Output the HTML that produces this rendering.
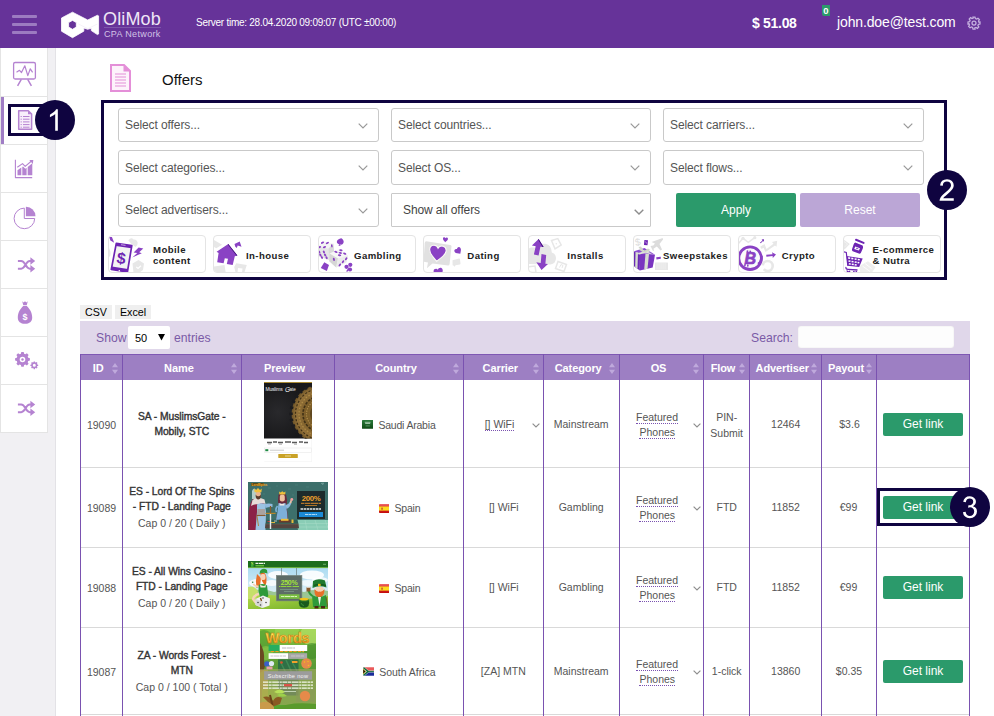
<!DOCTYPE html>
<html>
<head>
<meta charset="utf-8">
<title>Offers</title>
<style>
*{box-sizing:border-box;margin:0;padding:0}
html,body{width:994px;height:716px;overflow:hidden;background:#fff}
body{font-family:"Liberation Sans",sans-serif;color:#555;position:relative}
.abs{position:absolute}
/* header */
#hdr{position:absolute;left:0;top:0;width:994px;height:48px;background:#663399}
#hdr .bar{position:absolute;left:12px;width:25px;height:3px;background:#9c7bc1;border-radius:1px}
#hdr .t{position:absolute;color:#fff;white-space:nowrap;line-height:1}
/* sidebar */
#sideBg{position:absolute;left:0;top:48px;width:56px;height:668px;background:#f1f0f3;border-right:1px solid #e3e2e6}
#side{position:absolute;left:0;top:48px;width:48px;height:385px;background:#fff;border-left:1px solid #e4e4e4;border-right:1px solid #e4e4e4;border-bottom:1px solid #e4e4e4}
#side .it{position:absolute;left:0;width:46px;height:49px;border-bottom:1px solid #e4e4e4}
#side svg{position:absolute;overflow:visible}
.navy{background:#0f0440}
.circ{position:absolute;width:40px;height:40px;border-radius:50%;background:#0f0440;color:#fff;font-size:30px;line-height:40px;text-align:center}
/* filter */
.sel{position:absolute;height:34px;border:1px solid #c9c9c9;border-radius:3px;background:#fff;font-size:12px;letter-spacing:-.1px;color:#555;line-height:32px;padding-left:6px;white-space:nowrap}
.sel svg{position:absolute;right:10px;top:14px}
.btn{position:absolute;color:#fff;font-size:12px;text-align:center;border-radius:2px}
.card{position:absolute;top:235px;width:98px;height:38px;border:1px solid #e4e4e4;border-radius:4px;background:#fff;overflow:hidden}
.card .lb{position:absolute;font-weight:bold;font-size:9.600px;line-height:11px;letter-spacing:.42px;color:#222;white-space:nowrap}
.card svg{position:absolute;left:0;top:0}
/* table */
#tbl{position:absolute;left:80px;top:354px;width:890px}
.th{position:absolute;top:354px;height:26px;background:#9d7fc3;color:#fff;font-weight:bold;font-size:11px;line-height:28px;letter-spacing:-.1px;white-space:nowrap}
.vl{position:absolute;width:1px;background:#7a52b0;top:354px;height:362px}
.hl{position:absolute;left:81px;width:889px;height:1px;background:#d9d9d9}
.td{position:absolute;font-size:10.5px;color:#555;white-space:nowrap;line-height:16px;text-align:center}
.nm{color:#333;font-weight:normal;font-size:10.300px;letter-spacing:-.05px;-webkit-text-stroke:.38px #333}
.ct{letter-spacing:-.2px}
.dot{border-bottom:1px dotted #7a52b0}
.gl{position:absolute;left:883px;width:80px;height:22.700px;background:#2b9a6b;color:#fff;font-size:12px;line-height:23px;text-align:center;border-radius:2px}
.srt{position:absolute;top:362.700px;width:6px;height:11px}
</style>
</head>
<body>

<!-- ================= HEADER ================= -->
<div id="hdr">
  <div class="bar" style="top:15px"></div>
  <div class="bar" style="top:23px"></div>
  <div class="bar" style="top:31px"></div>
  <svg class="abs" style="left:60px;top:10px" width="42" height="30" viewBox="60 10 42 30">
    <path fill="#fff" stroke="#fff" stroke-width=".8" stroke-linejoin="round" fill-rule="evenodd" d="M72.500 12.200L87.700 20L97.400 15.300L98.600 15.900L98.600 34L97.400 34.600L91.300 30.600L91.300 28.200L87.700 29.300L83.800 28L83.800 31.200L72.500 37.700L61.500 31.200L61.500 18Z M72.500 20.400L76.300 22.600L76.300 27.100L72.500 29.300L68.600 27.100L68.600 22.600Z"/>
    <path d="M78.400 23.900L87.700 28.700L97.400 24" fill="none" stroke="#ece4f3" stroke-width=".5"/>
  </svg>
  <div class="t" style="left:103px;top:10px;font-size:18px;letter-spacing:.15px;color:#eee6f6">OliMob</div>
  <div class="abs" style="left:104px;top:27px;width:57px;height:1px;background:#7d55aa"></div>
  <div class="t" style="left:104px;top:29.500px;font-size:9px;letter-spacing:.35px;color:#d2c2e6">CPA Network</div>
  <div class="t" id="stime" style="left:196px;top:18px;font-size:10px;letter-spacing:-.26px">Server time: 28.04.2020 09:09:07 (UTC ±00:00)</div>
  <div class="t" id="bal" style="left:752px;top:16px;font-size:14px;font-weight:bold;letter-spacing:-.3px">$ 51.08</div>
  <div class="abs" style="left:822px;top:5px;width:8px;height:11px;background:#2b9a6b;color:#fff;font-size:9.500px;font-weight:bold;line-height:11px;text-align:center;border-radius:0 0 0 2px">0</div>
  <div class="t" id="mail" style="left:837px;top:15px;font-size:14px;letter-spacing:-.13px">john.doe@test.com</div>
  <svg class="abs" style="left:967px;top:16px" width="14" height="14" viewBox="0 0 14 14" fill="none" stroke="#c6b2e0" stroke-width="1.250">
    <circle cx="7" cy="7" r="2"/>
    <path d="M6 1h2l.4 1.6 1.2.5 1.4-.9 1.4 1.4-.9 1.4.5 1.2L13 6v2l-1.600.4-.5 1.200.900 1.400-1.400 1.400-1.400-.900-1.200.500L8 13H6l-.4-1.600-1.200-.500-1.400.900-1.400-1.400.900-1.400-.500-1.200L1 8V6l1.600-.4.500-1.200-.900-1.400 1.400-1.400 1.400.900 1.200-.500z"/>
  </svg>
</div>

<!-- ================= SIDEBAR ================= -->
<div id="sideBg"></div>
<div id="side">
  <div class="it" style="top:0"></div>
  <div class="it" style="top:48px"></div>
  <div class="it" style="top:96px"></div>
  <div class="it" style="top:144px"></div>
  <div class="it" style="top:192px"></div>
  <div class="it" style="top:240px"></div>
  <div class="it" style="top:288px"></div>
  <div class="it" style="top:336px;border-bottom:0"></div>
  <div class="abs" style="left:0;top:49px;width:3px;height:47px;background:#a07dc5"></div>
</div>
<!-- sidebar icons -->
<svg class="abs" style="left:0;top:48px" width="60" height="390" viewBox="0 48 60 390" fill="none" stroke="#b583d1" stroke-width="1.300" stroke-linejoin="round">
  <!-- 1 presentation -->
  <rect x="13.600" y="62.500" width="21.800" height="16.500" rx="1.500"/>
  <path d="M21.300 79.300L17.600 85.800M27.700 79.300L31.400 85.800" stroke-width="1.500"/>
  <path d="M16.500 72.200L19.500 70.300L21.500 72.500L24.800 65.800L27.800 75.600L30.300 68.800L32.600 72.300" stroke-width="1.200"/>
  <!-- 2 document -->
  <path d="M18.700 110.700H28.300L31.600 114V129.300H18.700Z" stroke-width="1.500" fill="#f8effb"/>
  <path d="M28 110.500V114.300H31.800Z" fill="#b583d1" stroke="none"/>
  <path d="M23 116.500H29.500M23 119.200H29.500M23 121.900H29.500M23 124.600H29.500M23 127.200H29.500" stroke-width="1"/>
  <path d="M20.600 116.500H21.800M20.600 119.200H21.800M20.600 121.900H21.800M20.600 124.600H21.800M20.600 127.200H21.800" stroke-width="1"/>
  <!-- 3 chart -->
  <path d="M15.400 159.800V177.600H32.200" stroke-width="1.100"/>
  <path d="M17.500 170.200L21.300 167.500V175.300H17.500ZM22.300 167L23 166.500L25.300 168.800L26.600 167.800V175.300H22.300ZM27.700 167L32.300 163.200V175.300H27.700Z" fill="#b583d1" stroke="none"/>
  <path d="M17.300 167.300L22.500 163.600L25.200 166.300L31.500 161" stroke-width="1.100"/>
  <path d="M29.300 160.100L33.300 159.900L32.800 164Z" fill="#b583d1" stroke="none"/>
  <!-- 4 pie -->
  <path d="M24.300 208.100A10.300 10.300 0 1 0 34.700 218.500H24.300Z" stroke-width="1"/>
  <path d="M25.900 206.800A9.400 9.400 0 0 1 35.500 216.200H25.900Z" fill="#b583d1" stroke="none"/>
  <!-- 5 shuffle -->
  <g stroke-width="2">
    <path d="M17.900 261H21.200C25.500 261 25.500 268.700 29.800 268.700H31.500M17.900 268.700H21.200C25.500 268.700 25.500 261 29.800 261H31.500"/>
    <path d="M30.400 257.200L35.200 261L30.400 264.800ZM30.400 264.900L35.200 268.700L30.400 272.500Z" fill="#b583d1" stroke="none"/>
  </g>
  <!-- 6 money bag -->
  <path d="M22.200 301.200L23.600 302.400L25 301.200L26.400 302.400L27.800 301.200L26.700 305.200H23.300ZM23.200 306H26.800C29.500 308.500 32.200 312.500 32.200 317.500C32.200 321.500 29.500 323.800 25 323.800C20.500 323.800 17.800 321.500 17.800 317.500C17.800 312.500 20.500 308.500 23.200 306Z" fill="#b583d1" stroke="none"/>
  <text x="25" y="320.200" font-family="Liberation Sans, sans-serif" font-weight="bold" font-size="9" text-anchor="middle" fill="#fff" stroke="none">$</text>
  <!-- 7 gears -->
  <g stroke="none" fill="#b583d1">
    <path fill-rule="evenodd" d="M21.300 352h2.400l.4 1.700 1.300.500 1.500-.900 1.700 1.700-.900 1.500.5 1.300 1.700.4v2.400l-1.700.4-.5 1.300.9 1.500-1.700 1.700-1.500-.900-1.300.500-.4 1.700h-2.400l-.4-1.700-1.300-.500-1.500.900-1.700-1.700.900-1.500-.500-1.300-1.700-.400v-2.400l1.700-.4.500-1.300-.900-1.500 1.700-1.700 1.500.900 1.300-.500zM22.500 356.700a2.800 2.800 0 1 0 0 5.600a2.800 2.800 0 1 0 0-5.600z"/>
    <circle cx="22.500" cy="359.500" r="1.200"/>
    <path fill-rule="evenodd" d="M33.700 361.400h1.200l.2.900.7.300.8-.5.900.9-.5.800.3.700.9.200v1.200l-.9.200-.3.700.5.800-.9.900-.8-.5-.7.300-.2.900h-1.200l-.2-.9-.7-.3-.8.500-.9-.9.500-.8-.3-.7-.9-.2v-1.200l.9-.2.300-.7-.5-.8.900-.9.800.5.700-.3zM34.300 363.800a1.500 1.500 0 1 0 0 3a1.500 1.500 0 1 0 0-3z"/>
  </g>
  <!-- 8 shuffle -->
  <g stroke-width="2" transform="translate(0 143.500)">
    <path d="M17.900 261H21.200C25.500 261 25.500 268.700 29.800 268.700H31.500M17.900 268.700H21.200C25.500 268.700 25.500 261 29.800 261H31.500"/>
    <path d="M30.400 257.200L35.200 261L30.400 264.800ZM30.400 264.900L35.200 268.700L30.400 272.500Z" fill="#b583d1" stroke="none"/>
  </g>
</svg>
<!-- annotation 1 -->
<div class="abs" style="left:8px;top:104px;width:40px;height:32px;border:3px solid #0f0440"></div>
<svg class="abs" style="left:35px;top:100px" width="40" height="40" viewBox="0 0 40 40"><circle cx="20" cy="20" r="20" fill="#0f0440"/><path transform="translate(11.66 30.80) scale(0.014648 -0.014648)" d="M763 0H583V1147Q518 1085 412.500 1023Q307 961 223 930V1104Q374 1175 487 1276Q600 1377 647 1472H763Z" fill="#fff"/></svg>


<!-- ================= TITLE ================= -->
<svg class="abs" style="left:110px;top:64px" width="21" height="28" viewBox="0 0 21 28">
  <path d="M1 1H14L20 7V27H1Z" fill="#fdf3fb" stroke="#e48fd8" stroke-width="2"/>
  <path d="M13.500 .5V7.500H20.500Z" fill="#e48fd8"/>
  <path d="M5 10H16M5 13H16M5 16H16M5 19H16M5 22H16" stroke="#e48fd8" stroke-width="1.200"/>
</svg>
<div class="abs" id="ttl" style="left:162px;top:71px;font-size:15px;line-height:17px;color:#111">Offers</div>

<!-- ================= FILTER ================= -->
<div class="abs" style="left:101px;top:100px;width:846px;height:180px;border:3px solid #0f0440"></div>
<div class="sel" style="left:118px;top:108px;width:261px">Select offers...<svg width="10" height="6" viewBox="0 0 10 6"><path d="M.7.700L5 5L9.300.7" fill="none" stroke="#999" stroke-width="1.200"/></svg></div>
<div class="sel" style="left:391px;top:108px;width:260px">Select countries...<svg width="10" height="6" viewBox="0 0 10 6"><path d="M.7.700L5 5L9.300.7" fill="none" stroke="#999" stroke-width="1.200"/></svg></div>
<div class="sel" style="left:663px;top:108px;width:261px">Select carriers...<svg width="10" height="6" viewBox="0 0 10 6"><path d="M.7.700L5 5L9.300.7" fill="none" stroke="#999" stroke-width="1.200"/></svg></div>
<div class="sel" style="left:118px;top:150px;width:261px;height:35px;line-height:34.500px">Select categories...<svg width="10" height="6" viewBox="0 0 10 6"><path d="M.7.700L5 5L9.300.7" fill="none" stroke="#999" stroke-width="1.200"/></svg></div>
<div class="sel" style="left:391px;top:150px;width:260px;height:35px;line-height:34.500px">Select OS...<svg width="10" height="6" viewBox="0 0 10 6"><path d="M.7.700L5 5L9.300.7" fill="none" stroke="#999" stroke-width="1.200"/></svg></div>
<div class="sel" style="left:663px;top:150px;width:261px;height:35px;line-height:34.500px">Select flows...<svg width="10" height="6" viewBox="0 0 10 6"><path d="M.7.700L5 5L9.300.7" fill="none" stroke="#999" stroke-width="1.200"/></svg></div>
<div class="sel" style="left:118px;top:193px;width:261px">Select advertisers...<svg width="10" height="6" viewBox="0 0 10 6"><path d="M.7.700L5 5L9.300.7" fill="none" stroke="#999" stroke-width="1.200"/></svg></div>
<div class="sel" style="left:391px;top:193px;width:260px;padding-left:11px;color:#444;border-radius:1px;line-height:33.500px">Show all offers<svg style="right:6.500px;top:14.500px" width="10" height="6" viewBox="0 0 10 6"><path d="M.7.700L5 5L9.300.7" fill="none" stroke="#8c8c8c" stroke-width="1.400"/></svg></div>
<div class="btn" style="left:676px;top:193px;width:120px;height:34px;line-height:34px;background:#2b9a6b">Apply</div>
<div class="btn" style="left:800px;top:193px;width:120px;height:34px;line-height:34px;background:#bba6d6">Reset</div>
<svg class="abs" style="left:927px;top:170px" width="40" height="40" viewBox="0 0 40 40"><circle cx="20" cy="20" r="20" fill="#0f0440"/><path transform="translate(11.66 30.80) scale(0.014648 -0.014648)" d="M1031 173V0H62Q60 65 83 125Q120 224 201.500 320Q283 416 437 542Q676 738 760 852.500Q844 967 844 1069Q844 1176 767.500 1249.500Q691 1323 568 1323Q438 1323 360 1245Q282 1167 281 1029L96 1048Q115 1255 239 1363.500Q363 1472 572 1472Q783 1472 906 1355Q1029 1238 1029 1065Q1029 977 993 892Q957 807 873.500 713Q790 619 596 455Q434 319 388 270.500Q342 222 312 173Z" fill="#fff"/></svg>
<!--CARDS_BEGIN--><!-- category cards -->
<div class="card" style="left:108px"><svg width="98" height="38" viewBox="0 0 98 38" style="left:-1px;top:-1px"><path d="M0 11.500Q3.500 16 2 21.500L0 22Z" fill="#e7e7e7"/>
<path d="M20.300 5.500Q23 1.800 25.500 4.500Q28.500 4 29.700 7.500Q30 10.500 27.500 12.100Q24 10 20.300 5.500Z" fill="#e7e7e7"/>
<path d="M24.500 28.500L30.500 25L36 28.500L35 35L31.500 37.500H25.500Z" fill="#e7e7e7"/>
<path d="M28.300 31.800L30 33.500L33 30.700" fill="none" stroke="#fff" stroke-width="1.200"/>
<path d="M8.300 8.300L23.800 10.600L19.400 37L3.300 34.400Z" fill="#f3f3f3" stroke="#6d24b3" stroke-width="1.700" stroke-linejoin="round"/>
<path d="M8.300 8.300L23.800 10.600L23.300 13.200L7.800 10.900Z" fill="#6d24b3"/>
<path d="M3.900 31.400L20 34L19.400 37L3.300 34.400Z" fill="#6d24b3"/>
<circle cx="11.300" cy="35.700" r=".8" fill="#fff"/>
<path d="M13 9.700L17.500 10.400" stroke="#fff" stroke-width=".6"/>
<text x="13.300" y="28.800" font-family="Liberation Sans, sans-serif" font-weight="bold" font-size="16" text-anchor="middle" fill="#6d24b3" transform="rotate(9 13.300 23)">$</text>
<path d="M35.300 13.600L30.600 12.600L25.600 17.400L29.300 18.100L24.300 22.400L33.800 18.200L31.200 17.300Z" fill="#8a42c4"/>
<path d="M1.200 2.100L3.900 2.100L6.200 7.700L2.400 5.600Z" fill="#8a42c4"/></svg><div class="lb" style="left:44px;top:8.17px">Mobile<br>content</div></div>
<div class="card" style="left:213px"><svg width="98" height="38" viewBox="0 0 98 38" style="left:-1px;top:-1px"><path d="M.9 5L9.100 9.700L3.300 13.200L.9 12Z" fill="#e7e7e7"/>
<path d="M.9 31.400L11.500 30L12.700 37.500H.9Z" fill="#e7e7e7"/>
<path d="M23.200 28.200L33.800 30L31.400 37.500H29L29.500 33.500L25 33L24.500 37.500H22.600L21.200 32Z" fill="#e7e7e7"/>
<path d="M15.300 9.100L24.400 20.600L21.800 21.200L19.700 30L13.800 29.100L15 23.800L11.800 23.200L10.600 28.200L4.200 27.300L5.600 17.900L3.600 16.800Z" fill="#8a42c4"/>
<path d="M15.300 9.100L24.400 20.600L23.600 20.800L14.800 9.500Z" fill="#3d0f78"/>
<path d="M21.500 9.100L26.700 6.500L28.500 11.800L24.700 10.600L23.800 13L22.300 11.800Z" fill="#8a42c4"/></svg><div class="lb" style="left:32px;top:14.17px">In-house</div></div>
<div class="card" style="left:318px"><svg width="98" height="38" viewBox="0 0 98 38" style="left:-1px;top:-1px"><path d="M.3 10.800L5.500 6.300L15.300 8.400L16.500 19.500L11 25L.8 21.500Z" fill="#f4f4f4"/>
<path d="M.3 10.800L10.300 13.800L11 25L.8 21.500Z" fill="#e6e6e6"/>
<path d="M10.300 13.800L15.300 8.400L16.500 19.500L11 25Z" fill="#d9d9d9"/>
<ellipse cx="4.5" cy="7.7" rx="1.7" ry="0.95" transform="rotate(-25 4.5 7.7)" fill="#8a42c4"/><ellipse cx="9.4" cy="8" rx="1.7" ry="0.95" transform="rotate(-25 9.4 8)" fill="#8a42c4"/><ellipse cx="1.5" cy="12.1" rx="1.7" ry="0.95" transform="rotate(-25 1.5 12.1)" fill="#8a42c4"/><ellipse cx="6.5" cy="12.1" rx="1.7" ry="0.95" transform="rotate(-25 6.5 12.1)" fill="#8a42c4"/>
<ellipse cx="13.8" cy="10.9" rx="0.8" ry="1.6" transform="rotate(-10 13.8 10.9)" fill="#8a42c4"/>
<ellipse cx="1.2" cy="17" rx="0.95" ry="1.5" transform="rotate(-30 1.2 17)" fill="#8a42c4"/><ellipse cx="5.9" cy="17" rx="0.95" ry="1.5" transform="rotate(-30 5.9 17)" fill="#8a42c4"/><ellipse cx="2.4" cy="20" rx="0.95" ry="1.5" transform="rotate(-30 2.4 20)" fill="#8a42c4"/><ellipse cx="7.1" cy="20" rx="0.95" ry="1.5" transform="rotate(-30 7.1 20)" fill="#8a42c4"/><ellipse cx="3.9" cy="22.5" rx="0.95" ry="1.5" transform="rotate(-30 3.9 22.5)" fill="#8a42c4"/><ellipse cx="8.6" cy="22.7" rx="0.95" ry="1.5" transform="rotate(-30 8.6 22.7)" fill="#8a42c4"/>
<path d="M11.500 18.500L21.500 14.100L30 20.600L28.500 27.300L18.200 32.600L11.200 26.200Z" fill="#f6f6f6"/>
<path d="M11.500 18.500L20 23.500L18.200 32.600L11.200 26.200Z" fill="#d6d6d6"/>
<path d="M20 23.500L30 20.600L28.500 27.300L18.200 32.600Z" fill="#ebebeb"/>
<ellipse cx="15.9" cy="24.4" rx="1" ry="1.6" transform="rotate(-15 15.9 24.4)" fill="#8a42c4"/>
<ellipse cx="17.9" cy="16.8" rx="1.7" ry="0.95" transform="rotate(20 17.9 16.8)" fill="#8a42c4"/><ellipse cx="22.9" cy="15.3" rx="1.7" ry="0.95" transform="rotate(10 22.9 15.3)" fill="#8a42c4"/><ellipse cx="22.3" cy="17.9" rx="1.7" ry="0.95" transform="rotate(10 22.3 17.9)" fill="#8a42c4"/><ellipse cx="21.5" cy="20.2" rx="1.7" ry="0.95" transform="rotate(10 21.5 20.2)" fill="#8a42c4"/><ellipse cx="26.7" cy="18.6" rx="1.7" ry="0.95" transform="rotate(20 26.7 18.6)" fill="#8a42c4"/>
<ellipse cx="28.2" cy="23.8" rx="0.95" ry="1.7" transform="rotate(35 28.2 23.8)" fill="#8a42c4"/><ellipse cx="25" cy="26.7" rx="0.95" ry="1.7" transform="rotate(35 25 26.7)" fill="#8a42c4"/><ellipse cx="21.8" cy="30" rx="0.95" ry="1.7" transform="rotate(35 21.8 30)" fill="#8a42c4"/>
<path d="M22.600 3.200C26 4.500 26.500 7.500 24.500 9.200C23.800 9.700 23 9.500 22.800 9.200L23.200 11H21.200L22 9.200C21.200 9.700 20.200 9.500 19.500 8.800C18 7 19.500 4.500 22.600 3.200Z" fill="#8a42c4" transform="rotate(12 22.600 7)"/>
<path d="M6.300 27.300L11 30L8.800 36L2.800 33Z" fill="#8a42c4"/>
<g fill="#8a42c4"><circle cx="32.300" cy="29.800" r="2.100"/><circle cx="28.500" cy="31.800" r="2.100"/><circle cx="32" cy="34.500" r="2.100"/><path d="M31 32L28 36.500L30 36.500Z"/></g></svg><div class="lb" style="left:35px;top:14.17px">Gambling</div></div>
<div class="card" style="left:423px"><svg width="98" height="38" viewBox="0 0 98 38" style="left:-1px;top:-1px"><path d="M3.200 6.300Q1.800 6.500 1.700 8L.6 26.700L5 27.600L3.900 33.200L9.500 28.500L25 30.500Q26.300 30.600 26.600 29L28.500 11.500Q28.600 10.200 27.200 10Z" fill="#e1e1e1"/>
<path d="M29.500 25.200L36 23.500Q36.800 23.300 37 24.200L37.500 28.500Q37.500 29.300 36.800 29.500L32.500 30.300L31.500 32L31 30.600L30.500 30.700Q29.700 30.800 29.600 30Z" fill="#e7e7e7"/>
<path d="M0 -3.200C-1.500 -6.500 -7 -6 -7 -1.500C-7 2.500 -2.500 5 0 8C2.500 5 7 2.500 7 -1.500C7 -6 1.500 -6.500 0 -3.200Z" transform="translate(14.700 17) rotate(6) scale(1.180)" fill="#8a42c4" stroke="#fbfbf6" stroke-width=".9"/>
<path d="M0 -3.200C-1.500 -6.500 -7 -6 -7 -1.500C-7 2.500 -2.500 5 0 8C2.500 5 7 2.500 7 -1.500C7 -6 1.500 -6.500 0 -3.200Z" transform="translate(22.400 4.300) rotate(5) scale(.36)" fill="#8a42c4"/>
<path d="M0 -3.200C-1.500 -6.500 -7 -6 -7 -1.500C-7 2.500 -2.500 5 0 8C2.500 5 7 2.500 7 -1.500C7 -6 1.500 -6.500 0 -3.200Z" transform="translate(35 15.500) rotate(-35) scale(.5)" fill="#8a42c4"/>
<path d="M0 -3.200C-1.500 -6.500 -7 -6 -7 -1.500C-7 2.500 -2.500 5 0 8C2.500 5 7 2.500 7 -1.500C7 -6 1.500 -6.500 0 -3.200Z" transform="translate(15.400 36.800) rotate(-14) scale(.66)" fill="#8a42c4"/></svg><div class="lb" style="left:43.3px;top:14.17px">Dating</div></div>
<div class="card" style="left:528px"><svg width="98" height="38" viewBox="0 0 98 38" style="left:-1px;top:-1px"><path d="M.3 15.500Q.5 12.500 4 12.500L10 12.800Q12 8 17.400 8.800Q23.500 10 23.800 17.500Q27.800 18.500 28 23Q28 28.500 22.500 29.500L.3 29Z" fill="#e7e7e7"/>
<path d="M23.500 5.500L29.800 3.600L33.200 10L27 13.800Z" fill="none" stroke="#e7e7e7" stroke-width="1.500"/><circle cx="28.300" cy="8.700" r=".8" fill="#e7e7e7"/>
<path d="M30 26.500L38.500 29.500L36 36.500L27.500 33.500Z" fill="none" stroke="#e7e7e7" stroke-width="1.500"/><path d="M31.500 32.500L33 29.500L35 30.500L34 33" fill="none" stroke="#e7e7e7" stroke-width="1"/>
<path d="M.3 31.800L7 31L8 37.500H.3Z" fill="none" stroke="#e7e7e7" stroke-width="1.500"/>
<path d="M10.600 3.900L15.600 12.100L12.400 11.800L10.600 20.600L5.900 19.400L7.700 11.200L3.900 10.600Z" fill="#8a42c4"/>
<path d="M10.600 3.900L15.600 12.100L14.500 12L10.100 4.500Z" fill="#3d0f78"/>
<path d="M13.500 35L8.300 27.300L12.700 27.900L13.500 19.100L18.200 20L17.400 28.800L20 29.100Z" fill="#8a42c4"/></svg><div class="lb" style="left:38.3px;top:14.17px">Installs</div></div>
<div class="card" style="left:633px"><svg width="98" height="38" viewBox="0 0 98 38" style="left:-1px;top:-1px"><text x="4.800" y="10.500" font-family="Liberation Sans, sans-serif" font-size="10" text-anchor="middle" fill="#dcdcdc" transform="rotate(-12 4.800 7)">$</text>
<path d="M18.500 7L29 3.200Q30.500 3 30 4.500L26.500 9L29 14.500L27.500 15.500L23.800 11.500L20.500 13.800L21 15.500L20 16L18.500 13L17.500 11L20.300 10.500L22 8.500Z" fill="#dcdcdc"/>
<path d="M22.500 27.500H34.500Q35 27.500 35 28V34.500Q35 35 34.500 35H22.500Q22 35 22 34.500V28Q22 27.500 22.500 27.500Z" fill="#e7e7e7"/>
<path d="M24 28V34.500M26 28V34.500M28 28V34.500M30 28V34.500M32 28V34.500" stroke="#f4f4f4" stroke-width=".6"/>
<path d="M11.400 5L15 5.300L14.500 10.300L11 10Z" fill="#6d24b3"/><path d="M12.600 6.500L13.600 8.500" stroke="#cdb3ea" stroke-width=".8"/>
<path d="M23.200 22.300L27.700 21.700L27.900 23.700L23.500 24.500Z" fill="#8a42c4"/>
<path d="M.3 16.500L7 18L6.800 35.500L.3 30.800Z" fill="#6a2ab5"/>
<path d="M7 18L22 19.700L19.700 32.600L6.800 35.500Z" fill="#7a35c0"/>
<path d="M.3 16.500L11.500 13L22 19.700L7 18Z" fill="#8d4fd0"/>
<path d="M2.500 17L5 17.600L4.500 33.800L2.200 32.200Z" fill="#d6dbcf"/>
<path d="M12.500 18.600L16 19L14.500 33.800L11.200 34.500Z" fill="#d6dbcf"/>
<path d="M5.500 14.800L8 14L19 18.500L16.500 19Z" fill="#dfe3d8"/><path d="M14.500 15L17 16.500L6.500 19.500L3.500 18.800Z" fill="#dfe3d8"/>
<path d="M5.500 12L8 11.500L11 16.500L9 17Z" fill="#d0d5c8"/><path d="M15 13.500L17.500 15L12 17.500L10.500 16.500Z" fill="#d0d5c8"/></svg><div class="lb" style="left:29px;top:14.17px">Sweepstakes</div></div>
<div class="card" style="left:738px"><svg width="98" height="38" viewBox="0 0 98 38" style="left:-1px;top:-1px"><path d="M.3 8.600L5 3.300L10.300 7.400L16.800 2.700" fill="none" stroke="#e7e7e7" stroke-width="1.500"/><circle cx="5" cy="3.300" r="1.600" fill="#e7e7e7"/><circle cx="16.800" cy="2.700" r="1.600" fill="#e7e7e7"/>
<path d="M22.200 11.800L26.500 9L28.500 14L35.500 8.800L34 7L39.200 5.800L38.500 11.800L37 10.500L27.500 17L25.500 12.800L23.500 14Z" fill="#e7e7e7"/>
<circle cx="29.700" cy="31" r="5" fill="none" stroke="#e7e7e7" stroke-width="2.600" stroke-dasharray="12 4 20"/>
<circle cx="12.100" cy="23.200" r="11.300" fill="#fbfbfb" stroke="#8a42c4" stroke-width="2.800"/>
<path d="M20 29Q24 27 23.500 21" fill="none" stroke="#8a42c4" stroke-width="2.400"/>
<text x="12.300" y="29.200" font-family="Liberation Sans, sans-serif" font-weight="bold" font-style="italic" font-size="16" text-anchor="middle" fill="#8a42c4" stroke="#8a42c4" stroke-width=".7">B</text>
<path d="M9.600 15.300L9.200 17.500M12.400 15.700L12 17.900M7.200 29L6.800 31.200M10 29.500L9.600 31.700" stroke="#8a42c4" stroke-width="1.500"/>
<path d="M22 7.700L24.500 5.400L23.600 4.600L26 4.300L25.800 6.800L25 6L22.700 8.300Z" fill="#6d24b3"/>
<path d="M28.200 19.800L34.500 19.200L34 17.200L38 19.600L34.800 23L34.600 21L28.400 21.800Z" fill="#8a42c4"/></svg><div class="lb" style="left:42.7px;top:14.17px">Crypto</div></div>
<div class="card" style="left:843px"><svg width="98" height="38" viewBox="0 0 98 38" style="left:-1px;top:-1px"><path d="M0 3.900L6.800 8.900L1.500 14.400L0 13Z" fill="#e7e7e7"/><path d="M1 6.500L4.500 9L1.800 11.800" fill="none" stroke="#f7f7f7" stroke-width=".7"/>
<path d="M17.400 30.500L25 26.200L32.600 32L29 37.500H17.400L16.500 34Z" fill="#eeeeee"/><path d="M22 28.500L28.500 33.500M19.500 31L27 36.500" stroke="#fff" stroke-width=".8"/>
<path d="M13 4.800L20.600 7.900" stroke="#6d24b3" stroke-width="2" stroke-linecap="round"/>
<path d="M12.200 7.600L19.600 10.600Q20.500 12 19.800 13.500L17.800 18Q17 19 15.800 18.600L9.700 16.200Q8.600 15.500 9 14.300L10.600 9.500Q11 8 12.200 7.600Z" fill="#6d24b3"/>
<path d="M12.300 11.500L17 13.200L15.800 15.600L11.200 14Z" fill="#fff"/><path d="M13 13.200L15.300 13.800" stroke="#6d24b3" stroke-width=".8"/>
<path d="M.3 16.800L3.300 17.400L4.800 30.800" fill="none" stroke="#6d24b3" stroke-width="1.200"/>
<path d="M3.600 20.900L19.700 23.500L16.200 32L4.500 30.800Z" fill="#6d24b3"/>
<g fill="#fff"><rect x="5.200" y="22.200" width="2" height="1.600" transform="rotate(9 6 23)"/><rect x="8.400" y="22.700" width="2" height="1.600" transform="rotate(9 9 23)"/><rect x="11.600" y="23.200" width="2" height="1.600" transform="rotate(9 12 24)"/><rect x="14.800" y="23.700" width="2" height="1.600" transform="rotate(9 15 24)"/>
<rect x="5.500" y="25.200" width="2" height="1.600" transform="rotate(9 6 26)"/><rect x="8.600" y="25.700" width="2" height="1.600" transform="rotate(9 9 26)"/><rect x="11.700" y="26.200" width="2" height="1.600" transform="rotate(9 12 27)"/><rect x="14.600" y="26.700" width="1.800" height="1.600" transform="rotate(9 15 27)"/>
<rect x="5.800" y="28.100" width="2" height="1.500" transform="rotate(9 6 29)"/><rect x="8.800" y="28.500" width="2" height="1.500" transform="rotate(9 9 29)"/><rect x="11.800" y="29" width="2" height="1.500" transform="rotate(9 12 29)"/></g>
<path d="M3 32Q2.500 34.300 5 34.300L14.500 35" fill="none" stroke="#6d24b3" stroke-width="1.300"/>
<path d="M3.800 35.500Q5.300 38 7 35.800M10.400 36Q12 38.500 13.800 36.200" fill="none" stroke="#6d24b3" stroke-width="1.300"/></svg><div class="lb" style="left:28.5px;top:8.17px">E-commerce<br>&amp; Nutra</div></div>
<!--CARDS_END-->

<!-- ================= TABLE ================= -->
<div class="abs" style="left:80px;top:305px;width:32px;height:14px;background:#efefef;color:#000;font-size:10.7px;line-height:14px;text-align:center">CSV</div>
<div class="abs" style="left:115px;top:305px;width:36px;height:14px;background:#efefef;color:#000;font-size:10.7px;line-height:14px;text-align:center">Excel</div>
<div class="abs" style="left:80px;top:321px;width:890px;height:33px;background:#e0d7ea"></div>
<div class="abs" id="show" style="left:96px;top:331px;font-size:12.200px;line-height:15px;color:#7a5aa6">Show</div>
<div class="abs" style="left:128px;top:326px;width:42px;height:23px;background:#fff;border-radius:2px"></div>
<div class="abs" style="left:135px;top:332px;font-size:11px;line-height:13px;color:#000">50</div>
<svg class="abs" style="left:158px;top:334px" width="7" height="7" viewBox="0 0 7 7"><path d="M0 0H7L3.500 6.500Z" fill="#000"/></svg>
<div class="abs" id="entries" style="left:174px;top:331px;font-size:12.200px;line-height:15px;color:#7a5aa6">entries</div>
<div class="abs" id="search" style="left:751px;top:331px;font-size:12.200px;line-height:15px;color:#7a5aa6">Search:</div>
<div class="abs" style="left:798px;top:326px;width:156px;height:22px;background:#fdfdfd;border-radius:3px;box-shadow:inset 0 0 1.500px #ddd"></div>
<div class="abs" style="left:80px;top:354px;width:890px;height:26px;background:#9d7fc3;border-top:1px solid #7f58b3"></div>
<div class="th" style="left:58.2px;width:80px;text-align:center;background:none">ID</div>
<svg class="srt" style="left:112.2px" viewBox="0 0 6 11"><path d="M3 0L6 4.300H0ZM3 11L6 6.700H0Z" fill="#bfa9dc"/></svg>
<div class="th" style="left:138.9px;width:80px;text-align:center;background:none">Name</div>
<svg class="srt" style="left:231.0px" viewBox="0 0 6 11"><path d="M3 0L6 4.300H0ZM3 11L6 6.700H0Z" fill="#bfa9dc"/></svg>
<div class="th" style="left:244.5px;width:80px;text-align:center;background:none">Preview</div>
<div class="th" style="left:356.0px;width:80px;text-align:center;background:none">Country</div>
<svg class="srt" style="left:453.4px" viewBox="0 0 6 11"><path d="M3 0L6 4.300H0ZM3 11L6 6.700H0Z" fill="#bfa9dc"/></svg>
<div class="th" style="left:460.3px;width:80px;text-align:center;background:none">Carrier</div>
<svg class="srt" style="left:533.3px" viewBox="0 0 6 11"><path d="M3 0L6 4.300H0ZM3 11L6 6.700H0Z" fill="#bfa9dc"/></svg>
<div class="th" style="left:538.2px;width:80px;text-align:center;background:none">Category</div>
<svg class="srt" style="left:609.4px" viewBox="0 0 6 11"><path d="M3 0L6 4.300H0ZM3 11L6 6.700H0Z" fill="#bfa9dc"/></svg>
<div class="th" style="left:618.5px;width:80px;text-align:center;background:none">OS</div>
<svg class="srt" style="left:693.0px" viewBox="0 0 6 11"><path d="M3 0L6 4.300H0ZM3 11L6 6.700H0Z" fill="#bfa9dc"/></svg>
<div class="th" style="left:683.0px;width:80px;text-align:center;background:none">Flow</div>
<svg class="srt" style="left:739.2px" viewBox="0 0 6 11"><path d="M3 0L6 4.300H0ZM3 11L6 6.700H0Z" fill="#bfa9dc"/></svg>
<div class="th" style="left:742.3px;width:80px;text-align:center;background:none">Advertiser</div>
<svg class="srt" style="left:811.2px" viewBox="0 0 6 11"><path d="M3 0L6 4.300H0ZM3 11L6 6.700H0Z" fill="#bfa9dc"/></svg>
<div class="th" style="left:806.0px;width:80px;text-align:center;background:none">Payout</div>
<svg class="srt" style="left:865.6px" viewBox="0 0 6 11"><path d="M3 0L6 4.300H0ZM3 11L6 6.700H0Z" fill="#bfa9dc"/></svg>
<div class="hl" style="top:467px"></div>
<div class="hl" style="top:547px"></div>
<div class="hl" style="top:627px"></div>
<div class="hl" style="top:714px"></div>
<div class="vl" style="left:80px"></div>
<div class="vl" style="left:122px"></div>
<div class="vl" style="left:241px"></div>
<div class="vl" style="left:334px"></div>
<div class="vl" style="left:463px"></div>
<div class="vl" style="left:543px"></div>
<div class="vl" style="left:619px"></div>
<div class="vl" style="left:703px"></div>
<div class="vl" style="left:749px"></div>
<div class="vl" style="left:821px"></div>
<div class="vl" style="left:876px"></div>
<div class="vl" style="left:969px"></div>
<!--ROWS_BEGIN--><div class="td" style="left:31.5px;top:416.6px;width:140px;">19090</div>
<div class="td nm" style="left:111.8px;top:408.6px;width:140px;">SA - MuslimsGate -</div>
<div class="td nm" style="left:111.8px;top:424.4px;width:140px;">Mobily, STC</div>
<svg class="abs" style="left:361.8px;top:420.1px" width="11.300" height="8.800" viewBox="0 0 11.300 8.800"><defs><linearGradient id="gsa" x1="0" y1="0" x2="0" y2="1"><stop offset="0" stop-color="#2a7a3a"/><stop offset="1" stop-color="#0e4a14"/></linearGradient></defs><rect width="11.300" height="8.800" rx=".6" fill="url(#gsa)"/><path d="M2.800 2.300H8.500M3.200 3.500H8.200" stroke="#a9cdb0" stroke-width=".9"/><path d="M3.600 5.900H7.800" stroke="#9cc4a3" stroke-width=".5"/></svg>
<div class="td ct" style="left:378.4px;top:416.6px;text-align:left;letter-spacing:-0.2px">Saudi Arabia</div>
<div class="td" style="left:429.5px;top:416.0px;width:140px;"><span class="dot">[] WiFi</span></div>
<svg class="abs" style="left:532px;top:422.6px" width="8" height="5" viewBox="0 0 8 5"><path d="M.6.600L4 4L7.400.6" fill="none" stroke="#8e8e8e" stroke-width="1.150"/></svg>
<div class="td" style="left:511.2px;top:416.4px;width:140px;">Mainstream</div>
<div class="td" style="left:587.0px;top:408.6px;width:140px;"><span class="dot">Featured</span></div>
<div class="td" style="left:587.3px;top:424.4px;width:140px;"><span class="dot">Phones</span></div>
<svg class="abs" style="left:692.5px;top:422.6px" width="8" height="5" viewBox="0 0 8 5"><path d="M.6.600L4 4L7.400.6" fill="none" stroke="#8e8e8e" stroke-width="1.150"/></svg>
<div class="td" style="left:656.7px;top:408.6px;width:140px;">PIN-</div>
<div class="td" style="left:656.7px;top:424.6px;width:140px;">Submit</div>
<div class="td" style="left:715.7px;top:416.3px;width:140px;">12464</div>
<div class="td" style="left:779.5px;top:416.3px;width:140px;">$3.6</div>
<div class="gl" style="top:413px">Get link</div>
<div class="td" style="left:31.5px;top:499.6px;width:140px;">19089</div>
<div class="td nm" style="left:111.8px;top:483.6px;width:140px;">ES - Lord Of The Spins</div>
<div class="td nm" style="left:111.8px;top:499.4px;width:140px;">- FTD - Landing Page</div>
<div class="td" style="left:111.8px;top:515.2px;width:140px;">Cap 0 / 20 ( Daily )</div>
<svg class="abs" style="left:378.7px;top:504.0px" width="10.600" height="9" viewBox="0 0 10.600 9"><defs><linearGradient id="ges507" x1="0" y1="0" x2="0" y2="1"><stop offset="0" stop-color="#f06a6a"/><stop offset=".3" stop-color="#e03a3a"/><stop offset="1" stop-color="#c40a0a"/></linearGradient></defs><rect width="10.600" height="9" rx=".8" fill="url(#ges507)"/><rect y="2.500" width="10.600" height="4.100" fill="#fbdc1e"/><rect x="2.200" y="3.400" width="1.700" height="2.300" rx=".5" fill="#c9602a"/></svg>
<div class="td ct" style="left:394.5px;top:499.6px;text-align:left;letter-spacing:-0.2px">Spain</div>
<div class="td" style="left:433.8px;top:499.0px;width:140px;">[] WiFi</div>
<div class="td" style="left:511.2px;top:499.4px;width:140px;">Gambling</div>
<div class="td" style="left:587.0px;top:491.6px;width:140px;"><span class="dot">Featured</span></div>
<div class="td" style="left:587.3px;top:507.4px;width:140px;"><span class="dot">Phones</span></div>
<svg class="abs" style="left:692.5px;top:505.6px" width="8" height="5" viewBox="0 0 8 5"><path d="M.6.600L4 4L7.400.6" fill="none" stroke="#8e8e8e" stroke-width="1.150"/></svg>
<div class="td" style="left:656.7px;top:499.3px;width:140px;">FTD</div>
<div class="td" style="left:715.7px;top:499.3px;width:140px;">11852</div>
<div class="td" style="left:778.5px;top:499.3px;width:140px;">€99</div>
<div class="gl" style="top:496px">Get link</div>
<div class="td" style="left:31.5px;top:579.5px;width:140px;">19088</div>
<div class="td nm" style="left:111.8px;top:563.5px;width:140px;">ES - All Wins Casino -</div>
<div class="td nm" style="left:111.8px;top:579.3px;width:140px;">FTD - Landing Page</div>
<div class="td" style="left:111.8px;top:595.1px;width:140px;">Cap 0 / 20 ( Daily )</div>
<svg class="abs" style="left:378.7px;top:583.9px" width="10.600" height="9" viewBox="0 0 10.600 9"><defs><linearGradient id="ges587" x1="0" y1="0" x2="0" y2="1"><stop offset="0" stop-color="#f06a6a"/><stop offset=".3" stop-color="#e03a3a"/><stop offset="1" stop-color="#c40a0a"/></linearGradient></defs><rect width="10.600" height="9" rx=".8" fill="url(#ges587)"/><rect y="2.500" width="10.600" height="4.100" fill="#fbdc1e"/><rect x="2.200" y="3.400" width="1.700" height="2.300" rx=".5" fill="#c9602a"/></svg>
<div class="td ct" style="left:394.5px;top:579.5px;text-align:left;letter-spacing:-0.2px">Spain</div>
<div class="td" style="left:433.8px;top:578.9px;width:140px;">[] WiFi</div>
<div class="td" style="left:511.2px;top:579.3px;width:140px;">Gambling</div>
<div class="td" style="left:587.0px;top:571.5px;width:140px;"><span class="dot">Featured</span></div>
<div class="td" style="left:587.3px;top:587.3px;width:140px;"><span class="dot">Phones</span></div>
<svg class="abs" style="left:692.5px;top:585.5px" width="8" height="5" viewBox="0 0 8 5"><path d="M.6.600L4 4L7.400.6" fill="none" stroke="#8e8e8e" stroke-width="1.150"/></svg>
<div class="td" style="left:656.7px;top:579.2px;width:140px;">FTD</div>
<div class="td" style="left:715.7px;top:579.2px;width:140px;">11852</div>
<div class="td" style="left:778.5px;top:579.2px;width:140px;">€99</div>
<div class="gl" style="top:576px">Get link</div>
<div class="td" style="left:31.5px;top:663.5px;width:140px;">19087</div>
<div class="td nm" style="left:111.8px;top:647.5px;width:140px;">ZA - Words Forest -</div>
<div class="td nm" style="left:111.8px;top:663.3px;width:140px;">MTN</div>
<div class="td" style="left:111.8px;top:679.1px;width:140px;">Cap 0 / 100 ( Total )</div>
<svg class="abs" style="left:362.7px;top:666.8px" width="11.300" height="9" viewBox="0 0 12 9"><rect width="12" height="4.500" fill="#ea5a5a"/><rect y="4.500" width="12" height="4.500" fill="#1a2a9a"/><path d="M0 0L5.500 4.500L0 9Z" fill="#fff"/><path d="M0 0H1.500L6 3.600H12V5.400H6L1.500 9H0V7.600L3.800 4.500L0 1.400Z" fill="#0f6a3a" stroke="#f2f2f2" stroke-width=".5"/><path d="M0 1.900L3 4.500L0 7.100Z" fill="#111" stroke="#e8b612" stroke-width=".6"/></svg>
<div class="td ct" style="left:379.2px;top:663.5px;text-align:left;letter-spacing:-0.02px">South Africa</div>
<div class="td" style="left:433.3px;top:662.9px;width:140px;">[ZA] MTN</div>
<div class="td" style="left:511.2px;top:663.3px;width:140px;">Mainstream</div>
<div class="td" style="left:587.0px;top:655.5px;width:140px;"><span class="dot">Featured</span></div>
<div class="td" style="left:587.3px;top:671.3px;width:140px;"><span class="dot">Phones</span></div>
<svg class="abs" style="left:692.5px;top:669.5px" width="8" height="5" viewBox="0 0 8 5"><path d="M.6.600L4 4L7.400.6" fill="none" stroke="#8e8e8e" stroke-width="1.150"/></svg>
<div class="td" style="left:656.7px;top:663.2px;width:140px;">1-click</div>
<div class="td" style="left:715.7px;top:663.2px;width:140px;">13860</div>
<div class="td" style="left:779.0px;top:663.2px;width:140px;">$0.35</div>
<div class="gl" style="top:660.3px">Get link</div>
<!--ROWS_END-->
<!--PREV_BEGIN--><!-- preview thumbnails -->
<svg class="abs" style="left:264px;top:382px" width="48" height="80" viewBox="0 0 48 80">
<defs><radialGradient id="md" cx="57" cy="32" r="31" gradientUnits="userSpaceOnUse"><stop offset="0" stop-color="#8a6a30"/><stop offset=".5" stop-color="#7a5c28"/><stop offset=".8" stop-color="#94723a"/><stop offset="1" stop-color="#5f4820"/></radialGradient>
<radialGradient id="bgv" cx="14" cy="30" r="30" gradientUnits="userSpaceOnUse"><stop offset="0" stop-color="#29292c"/><stop offset="1" stop-color="#18181a"/></radialGradient>
<clipPath id="c1"><rect width="48" height="56.500"/></clipPath></defs>
<rect width="48" height="56.500" fill="url(#bgv)"/>
<rect width="48" height="1" fill="#a98a35"/>
<g clip-path="url(#c1)">
<circle cx="57" cy="32" r="29.500" fill="url(#md)"/>
<circle cx="57" cy="32" r="30" fill="none" stroke="#1b1b1e" stroke-width="3.400" stroke-dasharray="2.600 3.600"/>
<circle cx="57" cy="32" r="25.500" fill="none" stroke="#3f3016" stroke-width="1.200" stroke-dasharray="2.200 1.600"/>
<circle cx="57" cy="32" r="22" fill="none" stroke="#ad8a44" stroke-width="1.300" stroke-dasharray="1.600 1.600"/>
<circle cx="57" cy="32" r="18" fill="none" stroke="#3f3016" stroke-width="1.600" stroke-dasharray="2.600 1.300"/>
<circle cx="57" cy="32" r="14.500" fill="none" stroke="#b08c48" stroke-width="1.200" stroke-dasharray="1.200 1.300"/>
<circle cx="57" cy="32" r="11" fill="#5f4820"/>
</g>
<text x="1.500" y="9" font-family="Liberation Sans, sans-serif" font-size="5" fill="#f2f2f2" letter-spacing="-.2">Muslims</text>
<text x="21" y="9.500" font-family="Liberation Sans, sans-serif" font-size="6.500" font-style="italic" fill="#f2f2f2">G</text>
<text x="25.500" y="9" font-family="Liberation Sans, sans-serif" font-size="4.500" fill="#f2f2f2">ate</text>
<path d="M3 60.500H8M9 60H13M14 60.500H19M21 60H27M28 60.500H33M35 60H39M40 60.500H44" stroke="#5a5a5a" stroke-width="1.300"/>
<path d="M4 62H7M15 62.200H18M30 62.200H33" stroke="#777" stroke-width=".6"/>
<rect x=".5" y="66" width="47" height="4.300" fill="#fff" stroke="#e3e3e3" stroke-width=".5"/>
<rect x="1.300" y="67.200" width="3" height="2" fill="#1f8a43"/>
<path d="M6 68.200H20" stroke="#bbb" stroke-width=".8"/>
<rect x="14.300" y="72" width="19.500" height="4" rx=".6" fill="#c9a227"/>
<path d="M21 74H27" stroke="#f3e6b0" stroke-width=".8"/>
<path d="M47.700 57V80M.3 79.700H47.700" stroke="#efefef" stroke-width=".5"/>
</svg>
<svg class="abs" style="left:248px;top:482px" width="80" height="48" viewBox="0 0 80 48">
<rect width="80" height="48" fill="#3d6f6b"/>
<path d="M4 17V9Q6 4 8.500 9V17Z" fill="#cfe6e0" opacity=".8"/>
<path d="M20 6H23M28 4H30M40 7H43M47 3H50M58 5H61M15 12H17M44 13H46" stroke="#4a7f7a" stroke-width=".8"/>
<path d="M48 38H80V48H50Z" fill="#8acdb6"/>
<path d="M57 38L59 48M67 38L70 48M77 38L80 46M49 41.500H80M50 45H80" stroke="#a8dcc9" stroke-width=".5"/>
<!-- king -->
<path d="M5 17Q1 22 .5 32V48H8L9 30L17 24L15 17Z" fill="#8b2247"/>
<path d="M4.500 18Q9 14.500 16.500 17.500L17.500 22Q14 20.500 11 22.500Q7 21.500 3 24Z" fill="#e6dcd8"/>
<path d="M9 22.500Q13 20.500 17 22L18 30L17.500 48H7.500L9 30Z" fill="#9cc3e2"/>
<path d="M9.500 27H17V33.500H9Z" fill="#a9a3a0"/>
<path d="M8.500 33.500H17.500" stroke="#8a5a2c" stroke-width="1.100"/>
<path d="M9 34L10.500 44" stroke="#b07a2c" stroke-width=".9"/>
<path d="M16.500 22Q21 21 24.500 22L24.500 25Q21 24.500 17.500 26Z" fill="#8fbade"/>
<rect x="7.800" y="9.500" width="5" height="6.500" rx="2" fill="#e9b48f"/>
<path d="M7.600 12.500Q7.500 17.500 10.500 17.500Q13.200 17.200 13 12.500Q12 14.500 10.300 14.200Q8.600 14.500 7.600 12.500Z" fill="#5a3a2a"/>
<path d="M6.600 10.300L6.200 6.600L8 8L10 6L12 8L13.800 6.600L13.400 10.300Z" fill="#f0c13a"/>
<!-- queen -->
<path d="M36.500 22Q40 26 39.500 38H35Z" fill="#8b2247"/><path d="M29.500 30L28 38H31Z" fill="#8b2247"/>
<path d="M30.500 12.500Q29.500 19 30.500 23.500L38.500 23.500Q40 18 38 12.500Q34 10 30.500 12.500Z" fill="#6a2a3c"/>
<rect x="31.800" y="12.500" width="5" height="7" rx="2.200" fill="#efc19e"/>
<path d="M31.400 12.400L31.100 9.600L32.700 10.600L34.300 9.200L35.900 10.600L37.500 9.600L37.200 12.400Z" fill="#f0c13a"/>
<path d="M30.500 21Q34 22.500 37.500 21L39 30L39.500 38H28L29.500 30Z" fill="#7db0d8"/>
<path d="M31.500 21Q34 23 36.500 21L36.300 23.500H31.700Z" fill="#f1e9e4"/>
<path d="M29.500 24Q27 27 28.500 30" fill="none" stroke="#7db0d8" stroke-width="1.600"/>
<path d="M37.500 23Q41 22.500 42.300 18.500L43.600 19Q43 25 38.500 27Z" fill="#8fbade"/>
<path d="M41.800 21L42.800 17.500L44 18L43.300 21.500Z" fill="#efc19e"/>
<circle cx="43.800" cy="17.500" r="1.400" fill="#f2a0a0"/>
<!-- table -->
<path d="M18.500 37.800H49.500L50.500 42H17.500Z" fill="#2e5c54"/>
<path d="M17.500 42H50.500L51 46.300H17Z" fill="#54443f"/>
<path d="M17.500 42H50.500" stroke="#7a6a5a" stroke-width=".5"/>
<path d="M31 37.800H42.500V40.500H31Z" fill="#6a3a2c"/><path d="M33 36.800H40.500V38.800H33Z" fill="#f0c13a"/><rect x="43.500" y="37.500" width="2" height="3.500" fill="#e8bc3a"/>
<path d="M19.500 39.500H22" stroke="#c23b3b" stroke-width="1"/><path d="M23 40.500H27" stroke="#e0b43a" stroke-width="1"/><path d="M26 39H29" stroke="#d9d9d9" stroke-width=".8"/>
<!-- sword -->
<path d="M22.500 31V47" stroke="#e6edf0" stroke-width="1.400"/><path d="M17.500 31.400H27.600" stroke="#b8862c" stroke-width="1.200"/><path d="M22.500 24V31" stroke="#8a5a2c" stroke-width="1.300"/>
<!-- panel -->
<rect x="49" y="9" width="28" height="28" fill="#1d2b2c"/>
<text x="63" y="18.600" font-family="Liberation Sans, sans-serif" font-weight="bold" font-size="7.800" text-anchor="middle" fill="#f2a22c" letter-spacing="-.3">200%</text>
<path d="M53 21.300H73" stroke="#d9892c" stroke-width="1" stroke-dasharray="3 .5 6 .5 7 .5"/><path d="M57 23.500H69" stroke="#b87a2a" stroke-width=".9"/>
<path d="M52.500 27H73" stroke="#e8ecec" stroke-width="1.300" stroke-dasharray="2.500 .6"/>
<rect x="51" y="30" width="24" height="5" fill="#1b8ad6"/><path d="M57 32.500H69" stroke="#bfe3fb" stroke-width=".9" stroke-dasharray="3 .5"/>
<rect x="3" y="1" width="13" height="3" fill="#5a4a1a"/><text x="3.500" y="3.600" font-family="Liberation Sans, sans-serif" font-weight="bold" font-size="3.200" fill="#f0b02c">LordSpins</text>
<path d="M73 1.500L75.500 1L74.500 3" fill="none" stroke="#9fc7c1" stroke-width=".5"/>
</svg>
<svg class="abs" style="left:248px;top:561px" width="80" height="48" viewBox="0 0 80 48">
<defs><linearGradient id="sky" x1="0" y1="0" x2="0" y2="1"><stop offset="0" stop-color="#9fd6f0"/><stop offset=".7" stop-color="#def0f7"/><stop offset="1" stop-color="#def0f7"/></linearGradient>
<linearGradient id="hill" x1="0" y1="0" x2="1" y2="1"><stop offset="0" stop-color="#b7d84a"/><stop offset="1" stop-color="#6faf28"/></linearGradient></defs>
<rect width="80" height="48" fill="url(#sky)"/>
<ellipse cx="10" cy="22" rx="9" ry="4" fill="#fff" opacity=".9"/><ellipse cx="24" cy="22" rx="7" ry="3" fill="#fff" opacity=".8"/><ellipse cx="60" cy="22" rx="9" ry="3" fill="#fff" opacity=".7"/><ellipse cx="30" cy="14" rx="10" ry="4" fill="#fff" opacity=".9"/><ellipse cx="64" cy="14" rx="12" ry="4.500" fill="#fff" opacity=".9"/><ellipse cx="72" cy="19" rx="8" ry="3" fill="#fff" opacity=".8"/>
<path d="M0 31Q14 26 26 31Q40 27 56 31Q68 27 80 30V48H0Z" fill="#7fb56a" opacity=".7"/>
<path d="M0 35Q20 31 40 37Q60 40 80 35V48H0Z" fill="url(#hill)"/>
<path d="M0 26Q6 24 10 30L8 38H0Z" fill="#c6df6a"/>
<rect width="80" height="6.800" fill="#1e6d1e"/><rect y="6.300" width="80" height=".8" fill="#7fbf3a"/>
<rect x="3" y="1" width="2.500" height="4.800" fill="#3fae3a"/><path d="M3.500 1.200L5 3.500" stroke="#f1d23a" stroke-width=".7"/>
<path d="M7.500 2.300H17" stroke="#eef7ea" stroke-width="1.300" stroke-dasharray="3 .5 4 .5"/><path d="M7.500 4.800H16" stroke="#7fe04a" stroke-width="1"/>
<path d="M75 3.300H78" stroke="#7fbf7a" stroke-width=".8"/>
<!-- sign -->
<path d="M33.500 7V15M48.500 7V15" stroke="#5c6b66" stroke-width=".6"/>
<rect x="28.300" y="14.400" width="25.600" height="25.500" fill="#5d6c67" stroke="#78857f" stroke-width=".6"/>
<text x="41" y="23.500" font-family="Liberation Sans, sans-serif" font-weight="bold" font-size="7" text-anchor="middle" fill="#a4e23c" letter-spacing="-.3">250%</text>
<path d="M31 25.500H51" stroke="#8fd23c" stroke-width="1" stroke-dasharray="1 .5 6 .5 4 .5"/><path d="M32 28.500H50" stroke="#7c9a86" stroke-width=".8"/><path d="M36 30.500H46" stroke="#7c9a86" stroke-width=".8"/>
<rect x="31" y="33.300" width="20.500" height="4.500" fill="#7cc243"/><path d="M33 35.500H49" stroke="#d9f2b9" stroke-width="1" stroke-dasharray="3 .5 6 .5"/>
<!-- girl -->
<path d="M9 13Q7 20 8.500 27L12 25L13 17Z" fill="#e8702a"/><path d="M12 11Q18 10 18.500 17Q19 22 17 25L14 20Z" fill="#e56a24"/>
<path d="M12 10Q15 6 19 9L19.500 12.500Q15 11 11.500 13Z" fill="#2f9a3a"/>
<rect x="12.500" y="13" width="5" height="6" rx="2" fill="#f6d3b8"/>
<path d="M10.500 24Q15 22 19 24.500L20 32Q21 35 19 37L12 36Q10 30 10.500 24Z" fill="#2f9a3a"/>
<path d="M12 23.500Q15 26 18 24L17.500 26.500H12.500Z" fill="#f6e9dc"/>
<path d="M10.500 25Q7 26 5 22.500" fill="none" stroke="#f6d3b8" stroke-width="1.600"/><rect x="3" y="19.500" width="3.500" height="3.500" fill="#f4f4f4"/><circle cx="4.700" cy="21.200" r=".7" fill="#2f7a3a"/>
<path d="M11 33Q6 34 5 38L8 42" fill="none" stroke="#f6d3b8" stroke-width="2.400"/>
<path d="M7.500 38L15 34.500L22 37.500L21.500 44.500L14.500 47L7.500 44Z" fill="#f1f1f1"/><path d="M7.500 38L14.500 40.500V47L7.500 44Z" fill="#d9d9d9"/>
<circle cx="10" cy="41.500" r=".8" fill="#444"/><circle cx="12.500" cy="44" r=".8" fill="#444"/><circle cx="18" cy="41.500" r=".8" fill="#444"/><circle cx="15" cy="37" r=".8" fill="#444"/>
<path d="M12.500 37L13.500 40" stroke="#7a4a1a" stroke-width="1.400"/>
<!-- leprechaun -->
<path d="M65 20Q70 17 77 19.500L78.500 26.500Q71 24 64.500 27Z" fill="#1f7a2f"/><path d="M66 24.500Q71 22.500 78 24.500" stroke="#145a20" stroke-width="1.300" fill="none"/><rect x="70" y="22.800" width="2.600" height="2.400" fill="#f1c21d"/>
<rect x="67.500" y="26" width="8" height="5" rx="1.500" fill="#f6d3b8"/>
<path d="M66.500 28Q66 36 71 37Q76.500 36 76.500 28Q74 31.500 71.500 30.500Q69 31.500 66.500 28Z" fill="#e8702a"/>
<path d="M64 34Q71 38 78 34L79 46H65Z" fill="#2f9a3a"/><path d="M70 36L71.500 45L73 36Z" fill="#f1f1e6"/>
<path d="M64.500 35Q61 33 60.500 29" fill="none" stroke="#2f9a3a" stroke-width="2"/><rect x="58.500" y="26" width="4" height="4.500" fill="#8a5a2c"/><rect x="58.500" y="25.500" width="4" height="1.200" fill="#f4f4f4"/>
<path d="M78 36L80 47" stroke="#6a4a2a" stroke-width=".8"/>
<path d="M66.500 45H70.500V47.500H66.500ZM73 45H77V47.500H73Z" fill="#4a2a12"/>
<!-- pot -->
<ellipse cx="56" cy="38.300" rx="4.800" ry="1.500" fill="#f3c21d"/>
<path d="M51 39Q49.500 46.500 56 46.800Q62.500 46.500 61 39Z" fill="#1a5a1e"/><ellipse cx="56" cy="39.200" rx="5.300" ry="1.300" fill="#2c7a2c"/><ellipse cx="56" cy="38.500" rx="4" ry="1" fill="#f3c21d"/>
<path d="M53 42Q54 44.500 56 44.500" stroke="#3f9a3f" stroke-width=".8" fill="none"/>
</svg>
<svg class="abs" style="left:260px;top:629px" width="56" height="80" viewBox="0 0 56 80">
<defs><linearGradient id="fr" x1="0" y1="0" x2="0" y2="1"><stop offset="0" stop-color="#86c83e"/><stop offset=".45" stop-color="#5a9a38"/><stop offset="1" stop-color="#55a52c"/></linearGradient>
<linearGradient id="wd" x1="0" y1="0" x2="0" y2="1"><stop offset=".3" stop-color="#ffe650"/><stop offset=".62" stop-color="#fbc02d"/><stop offset=".85" stop-color="#f59a1b"/></linearGradient></defs>
<rect width="56" height="80" fill="url(#fr)"/>
<circle cx="50" cy="6" r="10" fill="#b5e06a" opacity=".7"/><circle cx="4" cy="10" r="9" fill="#4f9a30" opacity=".6"/><circle cx="27" cy="2" r="12" fill="#a5d85a" opacity=".5"/><circle cx="6" cy="24" r="7" fill="#8cc84a" opacity=".6"/><circle cx="52" cy="22" r="8" fill="#3f8a2a" opacity=".6"/>
<path d="M0 14Q5 22 4 32Q6 38 3 42L0 44Z" fill="#6a4a22"/>
<text x="27.500" y="14" font-family="Liberation Sans, sans-serif" font-weight="bold" font-size="14.500" text-anchor="middle" fill="url(#wd)" stroke="#c9791a" stroke-width=".6" letter-spacing="-.2">Words</text>
<rect x="8.600" y="16" width="11.200" height="6" fill="#27ae60"/>
<rect x="19.700" y="16" width="27.500" height="6" fill="#fff"/><path d="M22 19H35" stroke="#aaa" stroke-width=".8" stroke-dasharray="4 .6 6 .6"/>
<path d="M11 22.500H44" stroke="#f59a1b" stroke-width="1.200" stroke-dasharray="3 1.500"/>
<rect x="8.600" y="24.200" width="19.500" height="5.700" fill="#fff"/><path d="M10.500 27H26" stroke="#b8b8b8" stroke-width=".8" stroke-dasharray="3 .5 5 .5"/>
<rect x="28.100" y="24.200" width="19" height="5.700" fill="#a9a9a9"/><path d="M31 27H44" stroke="#d0d0d0" stroke-width=".8" stroke-dasharray="4 .5 5 .5"/>
<rect x="18" y="30.500" width="20.500" height="36" fill="#2f6f45"/>
<path d="M20 32L26 44M26 31L33 46M31 31L37 42" stroke="#3f8a55" stroke-width="1.500"/>
<circle cx="21.500" cy="33.500" r="1.300" fill="#e0502a"/><rect x="32" y="32" width="5.500" height="2" fill="#f0a02a"/>
<circle cx="7" cy="35" r="2.800" fill="#3a5fc8"/><circle cx="11.500" cy="34.500" r="2.600" fill="#dfeaf5"/><rect x="6.500" y="37.500" width="6" height="3" fill="#e8a0a8"/>
<circle cx="46.500" cy="34.500" r="5.300" fill="#e58a4a"/><circle cx="44.500" cy="33" r=".8" fill="#f3c21d"/><circle cx="48.500" cy="36.500" r=".8" fill="#f3c21d"/><circle cx="48" cy="32.500" r=".7" fill="#f3c21d"/>
<rect x="0" y="41" width="8" height="33" fill="#b99a3a" opacity=".75"/>
<rect x="0" y="40" width="56" height="36" fill="#b8a86e" opacity=".5"/>
<rect x="4.100" y="42.200" width="48" height="8.500" fill="#9c9c9c"/>
<text x="28" y="48.700" font-family="Liberation Sans, sans-serif" font-size="5.600" text-anchor="middle" fill="#f4f4f4" letter-spacing=".3">Subscribe now</text>
<path d="M3 53.200H53M3 56.200H53M3 59.200H53" stroke="#f4f7ea" stroke-width="1.300" stroke-dasharray="5 .6 3 .6 7 .6 2 .6"/>
<rect x="24" y="55" width="8" height="2.400" fill="#d9534a"/>
<path d="M20 62.500H36" stroke="#d6e6c9" stroke-width=".8"/>
<rect x="36" y="60" width="19" height="13" fill="#8a9a5a" opacity=".6"/>
<circle cx="45" cy="67" r="5.200" fill="#e58a4a"/>
<path d="M2 60H20V74H2Z" fill="#a9b84a" opacity=".55"/>
<path d="M3 68Q10 66 13 72Q16 66 22 69L20 75L12 78L9 74Z" fill="#8a5a22"/><path d="M10 66L12.500 76" stroke="#6a4218" stroke-width="2"/>
<path d="M14 63Q20 58 25 63Q20 66 14 63Z" fill="#b8e05a"/><path d="M17 66Q22 62 27 67Q21 69 17 66Z" fill="#9cd04a"/>
<path d="M0 74Q8 70 14 78L14 80H0Z" fill="#c99a4a"/>
<path d="M14 80Q30 72 56 75V80Z" fill="#5a9a2c"/>
</svg>
<!--PREV_END-->
<div class="abs" style="left:877px;top:488px;width:93px;height:38px;border:3px solid #0f0440"></div>
<svg class="abs" style="left:950px;top:487px" width="40" height="40" viewBox="0 0 40 40"><circle cx="20" cy="20" r="20" fill="#0f0440"/><path transform="translate(11.66 30.80) scale(0.014648 -0.014648)" d="M86 387L266 411Q297 258 371.500 190.500Q446 123 553 123Q680 123 767.500 211Q855 299 855 429Q855 553 774 633.500Q693 714 568 714Q517 714 441 694L461 852Q479 850 490 850Q605 850 697 910Q789 970 789 1095Q789 1194 722 1259Q655 1324 549 1324Q444 1324 374 1258Q304 1192 284 1060L104 1092Q137 1273 254 1372.500Q371 1472 545 1472Q665 1472 766 1420.500Q867 1369 920.500 1280Q974 1191 974 1091Q974 996 923 918Q872 840 772 794Q902 764 974 669.500Q1046 575 1046 433Q1046 241 906 107.500Q766 -26 552 -26Q359 -26 231.500 89Q104 204 86 387Z" fill="#fff"/></svg>


</body>
</html>
